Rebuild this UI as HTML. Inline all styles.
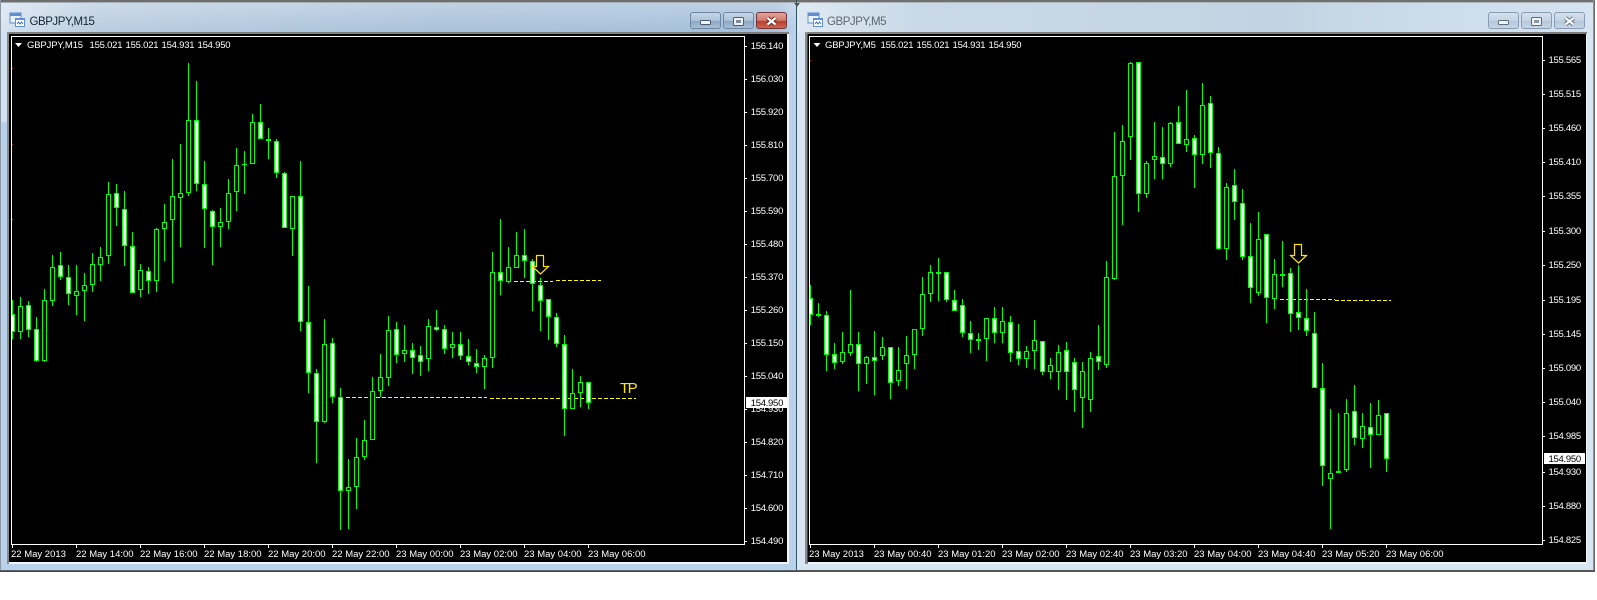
<!DOCTYPE html>
<html><head><meta charset="utf-8"><title>GBPJPY</title>
<style>
html,body{margin:0;padding:0;background:#fff;width:1597px;height:600px;overflow:hidden}
svg{display:block}
text{font-family:"Liberation Sans",Arial,sans-serif}
.p text{font-size:9.5px;letter-spacing:-.28px;fill:#fff}
.d text{font-size:9.5px;fill:#fff}
.h{font-size:9.5px;letter-spacing:-.15px;fill:#fff}
.n{font-size:9.5px;letter-spacing:-.22px;fill:#fff}
.t{font-size:11.5px;letter-spacing:-.45px}
</style></head><body>
<svg width="1597" height="600" viewBox="0 0 1597 600" xmlns="http://www.w3.org/2000/svg">
<defs>
<linearGradient id="a1" x1="0" x2="1" y1="0" y2="0"><stop offset="0" stop-color="#d6e3f0"/><stop offset=".12" stop-color="#b9cde1"/><stop offset=".55" stop-color="#a9c1d9"/><stop offset=".97" stop-color="#a4bfda"/><stop offset="1" stop-color="#b9d1ea"/></linearGradient>
<linearGradient id="a2" x1="0" x2="1" y1="0" y2="0"><stop offset="0" stop-color="#dfe9f3"/><stop offset=".15" stop-color="#c9d9e7"/><stop offset=".6" stop-color="#c2d4e3"/><stop offset="1" stop-color="#d6e4f2"/></linearGradient>
<linearGradient id="v" x1="0" x2="0" y1="0" y2="1"><stop offset="0" stop-color="#fff" stop-opacity=".3"/><stop offset="1" stop-color="#fff" stop-opacity="0"/></linearGradient>
<linearGradient id="b1" x1="0" x2="0" y1="0" y2="1"><stop offset="0" stop-color="#c6d6e6"/><stop offset=".5" stop-color="#aec3d8"/><stop offset=".55" stop-color="#8da8c3"/><stop offset="1" stop-color="#a9c1d8"/></linearGradient>
<linearGradient id="b2" x1="0" x2="0" y1="0" y2="1"><stop offset="0" stop-color="#e3a79e"/><stop offset=".5" stop-color="#cf7a6c"/><stop offset=".55" stop-color="#b83f2e"/><stop offset="1" stop-color="#cf6a55"/></linearGradient>
<linearGradient id="b3" x1="0" x2="0" y1="0" y2="1"><stop offset="0" stop-color="#d6e2ed"/><stop offset=".5" stop-color="#c4d4e3"/><stop offset=".55" stop-color="#b5c8da"/><stop offset="1" stop-color="#c6d6e5"/></linearGradient>
</defs>

<!-- window 1 frame -->
<rect x="0" y="0" width="797" height="572" fill="#b9d1ea"/>
<rect x="0" y="0" width="797" height="32" fill="url(#a1)"/>
<rect x="0" y="0" width="797" height="32" fill="url(#v)"/>
<rect x="1" y="32" width="6" height="90" fill="#d3e2f1"/>
<rect x="0" y="0" width="797" height="2" fill="#6e6e6e"/>
<rect x="0" y="2" width="797" height="1" fill="#a5adb5"/>
<rect x="0" y="0" width="1" height="572" fill="#8c98a4"/>
<rect x="796" y="0" width="1" height="572" fill="#2f5560"/>
<rect x="0" y="570" width="797" height="1" fill="#5a6670"/>
<rect x="0" y="571" width="797" height="1" fill="#444"/>
<!-- client 1 -->
<rect x="7" y="32" width="782" height="532" fill="#f2f6fa"/>
<rect x="7" y="32" width="782" height="2" fill="#7d7d7d"/>
<rect x="7" y="32" width="2" height="532" fill="#8a8a8a"/>
<rect x="9" y="34" width="778" height="528" fill="#000"/>

<!-- window 2 frame -->
<rect x="797" y="0" width="798" height="572" fill="#d8e5f2"/>
<rect x="797" y="0" width="798" height="32" fill="url(#a2)"/>
<rect x="797" y="0" width="798" height="2" fill="#707070"/>
<rect x="797" y="2" width="798" height="1" fill="#b0b6bc"/>
<rect x="1594" y="0" width="1" height="572" fill="#6a6a6a"/>
<rect x="1593" y="0" width="1" height="572" fill="#8b949c"/>
<rect x="797" y="570" width="798" height="2" fill="#555"/>
<path d="M794 3h6l-3 4z" fill="#555"/>
<!-- client 2 -->
<rect x="805" y="32" width="782" height="532" fill="#f2f6fa"/>
<rect x="805" y="32" width="782" height="2" fill="#7d7d7d"/>
<rect x="805" y="32" width="3" height="532" fill="#8a8a8a"/>
<rect x="808" y="34" width="778" height="528" fill="#000"/>

<!-- title icons -->
<g shape-rendering="crispEdges">
<rect x="10" y="13" width="11" height="10" fill="#e9f1fa" stroke="#5f8fcf"/>
<rect x="10" y="13" width="11" height="3" fill="#5f8fcf"/>
<rect x="15.5" y="18.5" width="9" height="8" fill="#fff" stroke="#5f8fcf"/>
<rect x="15" y="18" width="10" height="2" fill="#5f8fcf"/>
<rect x="808" y="13" width="11" height="10" fill="#e9f1fa" stroke="#5f8fcf"/>
<rect x="808" y="13" width="11" height="3" fill="#5f8fcf"/>
<rect x="813.5" y="18.5" width="9" height="8" fill="#fff" stroke="#5f8fcf"/>
<rect x="813" y="18" width="10" height="2" fill="#5f8fcf"/>
</g>
<path d="M17 24l1.5-2 1.5 2 1.5-2 1.5 2" fill="none" stroke="#3d6fb5"/>
<path d="M815 24l1.5-2 1.5 2 1.5-2 1.5 2" fill="none" stroke="#3d6fb5"/>
<text class="t" x="29.5" y="25" fill="#16222e">GBPJPY,M15</text>
<text class="t" x="827" y="25" fill="#5b6770">GBPJPY,M5</text>

<!-- buttons window 1 -->
<rect x="690.5" y="12.5" width="30" height="16" rx="2.5" fill="url(#b1)" stroke="#6e86a3"/>
<rect x="723.5" y="12.5" width="30" height="16" rx="2.5" fill="url(#b1)" stroke="#6e86a3"/>
<rect x="756.5" y="12.5" width="30" height="16" rx="2.5" fill="url(#b2)" stroke="#73343a"/>
<rect x="700.5" y="20.5" width="10" height="4" rx="1" fill="#f2f5f8" stroke="#4c5c70"/>
<rect x="733.5" y="17.5" width="10" height="8" rx="1" fill="#eef2f6" stroke="#4c5c70"/>
<rect x="736" y="20" width="5" height="3" fill="#7c8b9b"/>
<path d="M767.5 18l8 6.5M775.5 18l-8 6.5" stroke="#6e2626" stroke-width="4.2" fill="none"/>
<path d="M767.5 18l8 6.5M775.5 18l-8 6.5" stroke="#fff" stroke-width="2.2" fill="none"/>
<!-- buttons window 2 -->
<rect x="1488.5" y="12.5" width="30" height="16" rx="2.5" fill="url(#b3)" stroke="#8a9cb3"/>
<rect x="1521.5" y="12.5" width="30" height="16" rx="2.5" fill="url(#b3)" stroke="#8a9cb3"/>
<rect x="1554.5" y="12.5" width="30" height="16" rx="2.5" fill="url(#b3)" stroke="#8a9cb3"/>
<rect x="1498.5" y="20.5" width="10" height="4" rx="1" fill="#f2f5f8" stroke="#5d6c7e"/>
<rect x="1531.5" y="17.5" width="10" height="8" rx="1" fill="#eef2f6" stroke="#5d6c7e"/>
<rect x="1534" y="20" width="5" height="3" fill="#8a98a6"/>
<path d="M1565.5 18l8 6.5M1573.5 18l-8 6.5" stroke="#66747f" stroke-width="4.2" fill="none"/>
<path d="M1565.5 18l8 6.5M1573.5 18l-8 6.5" stroke="#f4f6f8" stroke-width="2.2" fill="none"/>

<!-- dashed levels -->
<g fill="none" stroke="#ffff00" stroke-dasharray="4 2" shape-rendering="crispEdges">
<path d="M346 397.5H487"/><path d="M490 398.5H636"/>
<path d="M514 281.5H553"/><path d="M556 280.5H601"/>
<path d="M1280 299.5H1335"/><path d="M1335 300.5H1391"/>
</g>

<!-- left chart wicks -->
<path shape-rendering="crispEdges" fill="none" stroke="#00ff00" d="M12.5 300V339M20.5 297V339M28.5 301V337M36.5 317V362M44.5 289V362M52.5 255V306M60.5 252V280M68.5 265V305M76.5 265V315M84.5 273V321M92.5 253V292M100.5 247V281M108.5 182V264M116.5 184V226M124.5 191V266M132.5 232V293M140.5 264V297M148.5 267V294M156.5 228V292M164.5 204V261M172.5 159V283M180.5 144V247M188.5 63V196M196.5 81V191M204.5 161V248M212.5 210V265M220.5 208V247M228.5 179V229M236.5 148V211M244.5 151V194M252.5 114V164M260.5 104V139M268.5 128V159M276.5 139V178M284.5 172V228M292.5 196V256M300.5 161V331M308.5 286V393M316.5 369V463M324.5 319V423M332.5 338V403M340.5 388V530M348.5 459V529M356.5 438V509M364.5 420V460M372.5 377V440M380.5 354V397M388.5 316V386M396.5 322V363M404.5 325V362M412.5 343V374M420.5 346V376M428.5 319V371M436.5 310V331M444.5 325V354M452.5 332V358M460.5 332V360M468.5 339V365M476.5 349V373M484.5 355V389M492.5 252V368M500.5 219V295M508.5 247V283M516.5 232V268M524.5 229V278M532.5 259V311M540.5 278V331M548.5 299V340M556.5 313V347M564.5 335V436M572.5 369V409M580.5 376V407M588.5 382V409M242 164.5h5M266 139.5h5M266 140.5h5"/>
<!-- left hollow -->
<path shape-rendering="crispEdges" fill="#000" stroke="#00ff00" d="M18.5 306.5h4V331.5h-4zM42.5 300.5h4V360.5h-4zM50.5 267.5h4V300.5h-4zM74.5 291.5h4V295.5h-4zM82.5 285.5h4V290.5h-4zM90.5 264.5h4V284.5h-4zM98.5 257.5h4V264.5h-4zM106.5 194.5h4V255.5h-4zM138.5 270.5h4V289.5h-4zM154.5 229.5h4V280.5h-4zM162.5 222.5h4V228.5h-4zM170.5 196.5h4V219.5h-4zM178.5 193.5h4V197.5h-4zM186.5 120.5h4V192.5h-4zM218.5 222.5h4V226.5h-4zM226.5 193.5h4V221.5h-4zM234.5 165.5h4V191.5h-4zM250.5 122.5h4V163.5h-4zM290.5 196.5h4V228.5h-4zM322.5 344.5h4V421.5h-4zM346.5 487.5h4V490.5h-4zM354.5 457.5h4V486.5h-4zM362.5 440.5h4V456.5h-4zM370.5 391.5h4V439.5h-4zM378.5 377.5h4V390.5h-4zM386.5 330.5h4V377.5h-4zM402.5 350.5h4V353.5h-4zM426.5 326.5h4V358.5h-4zM450.5 344.5h4V347.5h-4zM482.5 358.5h4V366.5h-4zM490.5 272.5h4V357.5h-4zM506.5 267.5h4V281.5h-4zM514.5 255.5h4V267.5h-4zM570.5 393.5h4V408.5h-4zM578.5 382.5h4V392.5h-4z"/>
<!-- left white -->
<path shape-rendering="crispEdges" fill="#fff" stroke="#00ff00" d="M10.5 314.5h4V331.5h-4zM26.5 305.5h4V329.5h-4zM34.5 329.5h4V360.5h-4zM58.5 265.5h4V276.5h-4zM66.5 277.5h4V293.5h-4zM114.5 193.5h4V207.5h-4zM122.5 209.5h4V245.5h-4zM130.5 246.5h4V292.5h-4zM146.5 271.5h4V280.5h-4zM194.5 120.5h4V183.5h-4zM202.5 184.5h4V208.5h-4zM210.5 211.5h4V226.5h-4zM258.5 122.5h4V138.5h-4zM274.5 141.5h4V172.5h-4zM282.5 173.5h4V227.5h-4zM298.5 196.5h4V321.5h-4zM306.5 322.5h4V372.5h-4zM314.5 373.5h4V421.5h-4zM330.5 343.5h4V396.5h-4zM338.5 397.5h4V490.5h-4zM394.5 329.5h4V354.5h-4zM410.5 350.5h4V357.5h-4zM418.5 355.5h4V361.5h-4zM434.5 327.5h4V329.5h-4zM442.5 329.5h4V348.5h-4zM458.5 344.5h4V355.5h-4zM466.5 356.5h4V361.5h-4zM474.5 363.5h4V366.5h-4zM498.5 272.5h4V280.5h-4zM522.5 255.5h4V260.5h-4zM530.5 261.5h4V283.5h-4zM538.5 285.5h4V300.5h-4zM546.5 299.5h4V316.5h-4zM554.5 317.5h4V343.5h-4zM562.5 344.5h4V408.5h-4zM586.5 382.5h4V402.5h-4z"/>

<!-- right chart wicks -->
<path shape-rendering="crispEdges" fill="none" stroke="#00ff00" d="M810.5 285V325M818.5 303V317M826.5 311V371M834.5 343V369M842.5 332V364M850.5 290V356M858.5 332V391M866.5 356V384M874.5 331V395M882.5 337V360M890.5 347V399M898.5 347V386M906.5 336V389M914.5 329V369M922.5 277V336M930.5 265V302M938.5 258V301M946.5 272V302M954.5 290V311M962.5 299V337M970.5 321V353M978.5 333V350M986.5 318V361M994.5 307V343M1002.5 307V343M1010.5 316V362M1018.5 324V365M1026.5 346V368M1034.5 320V369M1042.5 341V375M1050.5 358V379M1058.5 345V390M1066.5 342V400M1074.5 358V412M1082.5 362V428M1090.5 352V412M1098.5 325V370M1106.5 261V368M1114.5 132V280M1122.5 125V225M1130.5 62V160M1138.5 62V212M1146.5 161V198M1154.5 122V179M1162.5 127V179M1170.5 122V167M1178.5 106V144M1186.5 90V152M1194.5 135V188M1202.5 83V164M1210.5 96V168M1218.5 147V250M1226.5 183V260M1234.5 169V220M1242.5 189V260M1250.5 223V303M1258.5 212V296M1266.5 234V323M1274.5 259V309M1282.5 241V287M1290.5 268V332M1298.5 265V330M1306.5 289V336M1314.5 312V388M1322.5 363V486M1330.5 409V529M1338.5 413V473M1346.5 399V472M1354.5 385V445M1362.5 413V448M1370.5 403V468M1378.5 400V435M1386.5 413V472M816 314.5h5M816 315.5h5M936 272.5h5M936 273.5h5M976 339.5h5M976 340.5h5M1280 274.5h5M1280 275.5h5"/>
<!-- right hollow -->
<path shape-rendering="crispEdges" fill="#000" stroke="#00ff00" d="M840.5 352.5h4V361.5h-4zM848.5 344.5h4V352.5h-4zM864.5 357.5h4V363.5h-4zM880.5 347.5h4V355.5h-4zM896.5 370.5h4V380.5h-4zM904.5 355.5h4V363.5h-4zM912.5 329.5h4V354.5h-4zM920.5 294.5h4V328.5h-4zM928.5 272.5h4V293.5h-4zM984.5 318.5h4V338.5h-4zM1000.5 321.5h4V332.5h-4zM1024.5 351.5h4V358.5h-4zM1032.5 340.5h4V350.5h-4zM1048.5 365.5h4V371.5h-4zM1056.5 352.5h4V371.5h-4zM1080.5 371.5h4V397.5h-4zM1088.5 358.5h4V399.5h-4zM1104.5 277.5h4V364.5h-4zM1112.5 176.5h4V278.5h-4zM1120.5 141.5h4V175.5h-4zM1128.5 63.5h4V136.5h-4zM1144.5 163.5h4V193.5h-4zM1152.5 156.5h4V159.5h-4zM1168.5 123.5h4V163.5h-4zM1184.5 139.5h4V144.5h-4zM1200.5 105.5h4V154.5h-4zM1224.5 187.5h4V248.5h-4zM1256.5 239.5h4V292.5h-4zM1272.5 274.5h4V298.5h-4zM1328.5 473.5h4V478.5h-4zM1336.5 471.5h4V472.5h-4zM1344.5 413.5h4V469.5h-4zM1360.5 426.5h4V438.5h-4zM1376.5 415.5h4V434.5h-4z"/>
<!-- right white -->
<path shape-rendering="crispEdges" fill="#fff" stroke="#00ff00" d="M808.5 298.5h4V314.5h-4zM824.5 315.5h4V354.5h-4zM832.5 354.5h4V362.5h-4zM856.5 344.5h4V363.5h-4zM872.5 357.5h4V360.5h-4zM888.5 347.5h4V382.5h-4zM944.5 272.5h4V299.5h-4zM952.5 300.5h4V310.5h-4zM960.5 305.5h4V332.5h-4zM968.5 333.5h4V339.5h-4zM992.5 318.5h4V332.5h-4zM1008.5 322.5h4V352.5h-4zM1016.5 351.5h4V358.5h-4zM1040.5 341.5h4V371.5h-4zM1064.5 350.5h4V371.5h-4zM1072.5 362.5h4V389.5h-4zM1096.5 356.5h4V361.5h-4zM1136.5 62.5h4V193.5h-4zM1160.5 157.5h4V163.5h-4zM1176.5 122.5h4V143.5h-4zM1192.5 138.5h4V154.5h-4zM1208.5 103.5h4V152.5h-4zM1216.5 153.5h4V248.5h-4zM1232.5 185.5h4V201.5h-4zM1240.5 203.5h4V256.5h-4zM1248.5 256.5h4V287.5h-4zM1264.5 234.5h4V297.5h-4zM1288.5 273.5h4V313.5h-4zM1296.5 312.5h4V317.5h-4zM1304.5 318.5h4V330.5h-4zM1312.5 333.5h4V387.5h-4zM1320.5 388.5h4V465.5h-4zM1352.5 411.5h4V437.5h-4zM1368.5 427.5h4V434.5h-4zM1384.5 413.5h4V458.5h-4z"/>

<!-- arrows -->
<path d="M536.5 255.5h7v11h5l-8 7.5-8-7.5h4z" fill="#000" stroke="#ffe000" stroke-width="1.2"/>
<path d="M1294.5 244.5h7v11h5l-8 7.5-8-7.5h4z" fill="#000" stroke="#ffe000" stroke-width="1.2"/>
<text x="620" y="393" font-size="15" letter-spacing="-1.6" fill="#ffe600">TP</text>

<!-- chart clip edges + borders -->
<rect x="9" y="34" width="3" height="528" fill="#000"/>
<rect x="807.5" y="34" width="2.5" height="528" fill="#000"/>
<g shape-rendering="crispEdges" fill="none" stroke="#fff">
<rect x="11.5" y="36.5" width="733" height="508"/>
<rect x="809.5" y="36.5" width="733" height="508"/>
<path d="M745 46.5h2M745 79.5h2M745 112.5h2M745 145.5h2M745 178.5h2M745 211.5h2M745 244.5h2M745 277.5h2M745 310.5h2M745 343.5h2M745 376.5h2M745 409.5h2M745 442.5h2M745 475.5h2M745 508.5h2M745 541.5h2"/>
<path d="M1543 60.5h2M1543 94.5h2M1543 128.5h2M1543 162.5h2M1543 196.5h2M1543 231.5h2M1543 265.5h2M1543 300.5h2M1543 334.5h2M1543 368.5h2M1543 402.5h2M1543 436.5h2M1543 472.5h2M1543 506.5h2M1543 540.5h2"/>
<path d="M12.5 545v3M76.5 545v3M140.5 545v3M204.5 545v3M268.5 545v3M332.5 545v3M396.5 545v3M460.5 545v3M524.5 545v3M588.5 545v3"/>
<path d="M810.5 545v3M874.5 545v3M938.5 545v3M1002.5 545v3M1066.5 545v3M1130.5 545v3M1194.5 545v3M1258.5 545v3M1322.5 545v3M1386.5 545v3"/>
</g>
<g fill="#a03a3a" shape-rendering="crispEdges">
<rect x="12" y="68" width="1" height="1"/><rect x="12" y="144" width="1" height="1"/><rect x="12" y="219" width="1" height="1"/><rect x="810" y="60" width="1" height="1"/>
</g>

<!-- header -->
<path d="M15 43h7l-3.5 4z" fill="#fff"/>
<path d="M813.5 43h7l-3.5 4z" fill="#fff"/>
<text class="h" x="27" y="48">GBPJPY,M15</text>
<text class="n" x="89.5" y="48" word-spacing=".8">155.021 155.021 154.931 154.950</text>
<text class="h" x="825" y="48">GBPJPY,M5</text>
<text class="n" x="880.5" y="48" word-spacing=".8">155.021 155.021 154.931 154.950</text>

<!-- left price axis -->
<g class="p">
<text x="750.7" y="49">156.140</text><text x="750.7" y="82">156.030</text><text x="750.7" y="115">155.920</text><text x="750.7" y="148">155.810</text><text x="750.7" y="181">155.700</text><text x="750.7" y="214">155.590</text><text x="750.7" y="247">155.480</text><text x="750.7" y="280">155.370</text><text x="750.7" y="313">155.260</text><text x="750.7" y="346">155.150</text><text x="750.7" y="379">155.040</text><text x="750.7" y="412">154.930</text><text x="750.7" y="445">154.820</text><text x="750.7" y="478">154.710</text><text x="750.7" y="511">154.600</text><text x="750.7" y="544">154.490</text>
</g>
<rect x="746" y="397" width="41" height="11" fill="#fff"/>
<text x="750.7" y="406" font-size="9.5" letter-spacing="-.28" fill="#000">154.950</text>

<!-- right price axis -->
<g class="p">
<text x="1548.5" y="63">155.565</text><text x="1548.5" y="97">155.515</text><text x="1548.5" y="131">155.460</text><text x="1548.5" y="165">155.410</text><text x="1548.5" y="199">155.355</text><text x="1548.5" y="234">155.300</text><text x="1548.5" y="268">155.250</text><text x="1548.5" y="303">155.195</text><text x="1548.5" y="337">155.145</text><text x="1548.5" y="371">155.090</text><text x="1548.5" y="405">155.040</text><text x="1548.5" y="439">154.985</text><text x="1548.5" y="475">154.930</text><text x="1548.5" y="509">154.880</text><text x="1548.5" y="543">154.825</text>
</g>
<rect x="1544" y="453" width="41" height="11" fill="#fff"/>
<text x="1548.5" y="462" font-size="9.5" letter-spacing="-.28" fill="#000">154.950</text>

<!-- date axes -->
<g class="d">
<text x="11" y="557">22 May 2013</text><text x="76" y="557">22 May 14:00</text><text x="140" y="557">22 May 16:00</text><text x="204" y="557">22 May 18:00</text><text x="268" y="557">22 May 20:00</text><text x="332" y="557">22 May 22:00</text><text x="396" y="557">23 May 00:00</text><text x="460" y="557">23 May 02:00</text><text x="524" y="557">23 May 04:00</text><text x="588" y="557">23 May 06:00</text>
<text x="809" y="557">23 May 2013</text><text x="874" y="557">23 May 00:40</text><text x="938" y="557">23 May 01:20</text><text x="1002" y="557">23 May 02:00</text><text x="1066" y="557">23 May 02:40</text><text x="1130" y="557">23 May 03:20</text><text x="1194" y="557">23 May 04:00</text><text x="1258" y="557">23 May 04:40</text><text x="1322" y="557">23 May 05:20</text><text x="1386" y="557">23 May 06:00</text>
</g>
</svg>
</body></html>
